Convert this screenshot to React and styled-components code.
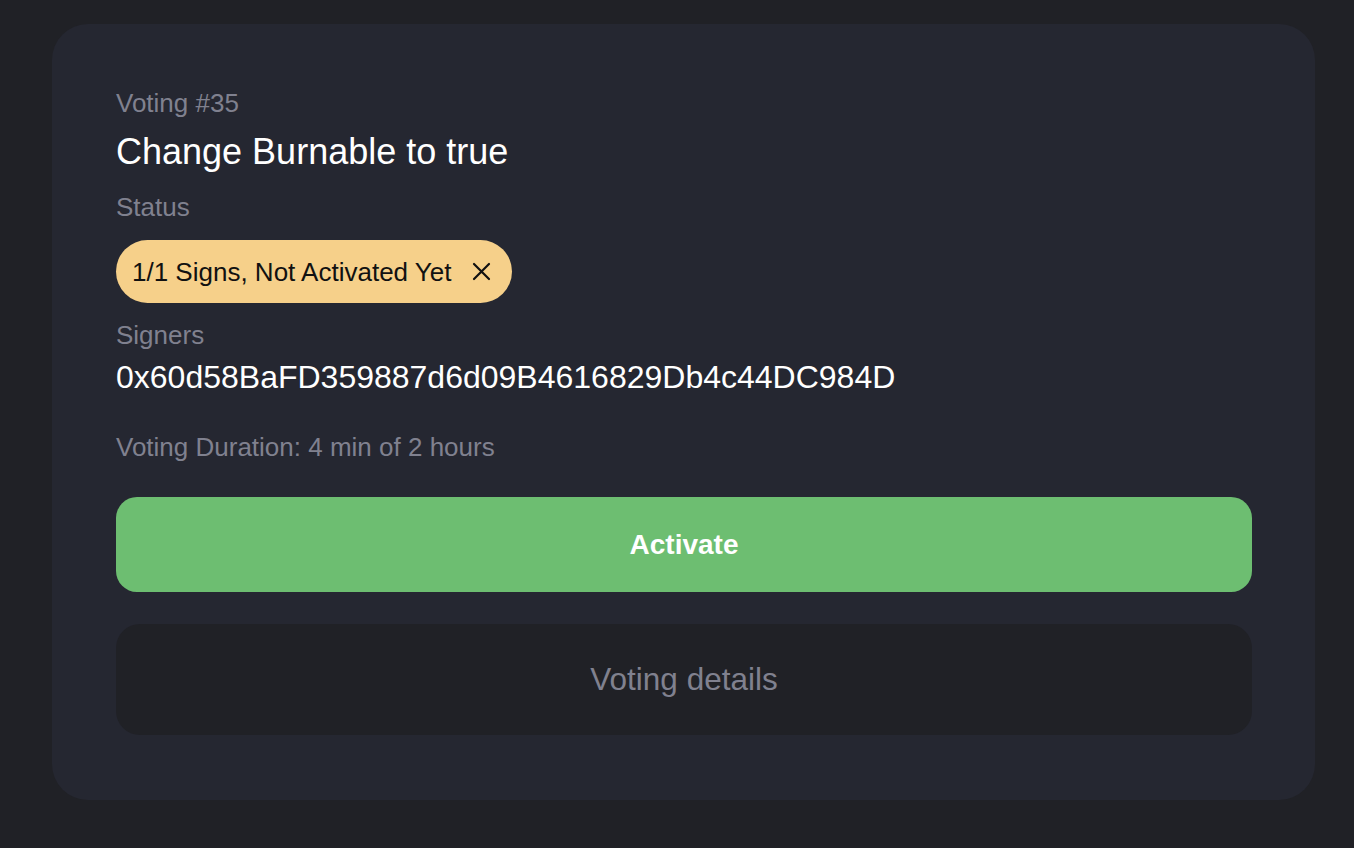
import React from 'react'
import styled, { createGlobalStyle } from 'styled-components'

const GlobalStyle = createGlobalStyle`
  html, body {
    margin: 0;
    padding: 0;
    background: #202126;
  }
  body {
    font-family: "Liberation Sans", Arial, Helvetica, sans-serif;
  }
`

const Page = styled.div`
  min-height: 848px;
  padding: 24px 39px 48px 52px;
  box-sizing: border-box;
`

const Card = styled.section`
  background: #252731;
  border-radius: 36px;
  padding: 63px 63px 65px 64px;
  display: flex;
  flex-direction: column;
`

const Label = styled.div`
  color: #80818f;
  font-size: 26px;
  line-height: 32px;
  margin-top: ${p => p.$mt || 0}px;
`

const Title = styled.h1`
  margin: 11px 0 0;
  color: #ffffff;
  font-size: 36px;
  font-weight: 400;
  line-height: 44px;
`

const Address = styled.div`
  margin-top: 6px;
  color: #ffffff;
  font-size: 32px;
  line-height: 40px;
`

const Badge = styled.div`
  align-self: flex-start;
  margin-top: 17px;
  height: 63px;
  box-sizing: border-box;
  padding: 0 21px 0 16px;
  display: inline-flex;
  align-items: center;
  gap: 21px;
  border-radius: 32px;
  background: #f6d08a;
  color: #111111;
  font-size: 26px;
  line-height: 1;
`

const CloseIcon = styled.svg`
  width: 19px;
  height: 19px;
  flex-shrink: 0;
`

const Button = styled.button`
  width: 100%;
  border: none;
  font-family: inherit;
  display: flex;
  align-items: center;
  justify-content: center;
  cursor: pointer;
  margin-top: ${p => p.$mt}px;
  height: ${p => p.$h}px;
  border-radius: ${p => p.$r}px;
  background: ${p => p.$bg};
  color: ${p => p.$color};
  font-size: ${p => p.$size}px;
  font-weight: ${p => p.$weight};
`

const App = () => (
  <Page>
    <GlobalStyle />
    <Card>
      <Label>Voting #35</Label>
      <Title>Change Burnable to true</Title>
      <Label $mt={17}>Status</Label>
      <Badge>
        1/1 Signs, Not Activated Yet
        <CloseIcon viewBox="0 0 19 19">
          <path d="M2 2 L17 17 M17 2 L2 17" stroke="#111" strokeWidth="2.2" strokeLinecap="round" />
        </CloseIcon>
      </Badge>
      <Label $mt={16}>Signers</Label>
      <Address>0x60d58BaFD359887d6d09B4616829Db4c44DC984D</Address>
      <Label $mt={34}>Voting Duration: 4 min of 2 hours</Label>
      <Button $mt={34} $h={95} $r={21} $bg="#6dbe71" $color="#ffffff" $size={28} $weight={700}>
        Activate
      </Button>
      <Button $mt={32} $h={111} $r={24} $bg="#202126" $color="#80818f" $size={31.5} $weight={400}>
        Voting details
      </Button>
    </Card>
  </Page>
)

export default App
